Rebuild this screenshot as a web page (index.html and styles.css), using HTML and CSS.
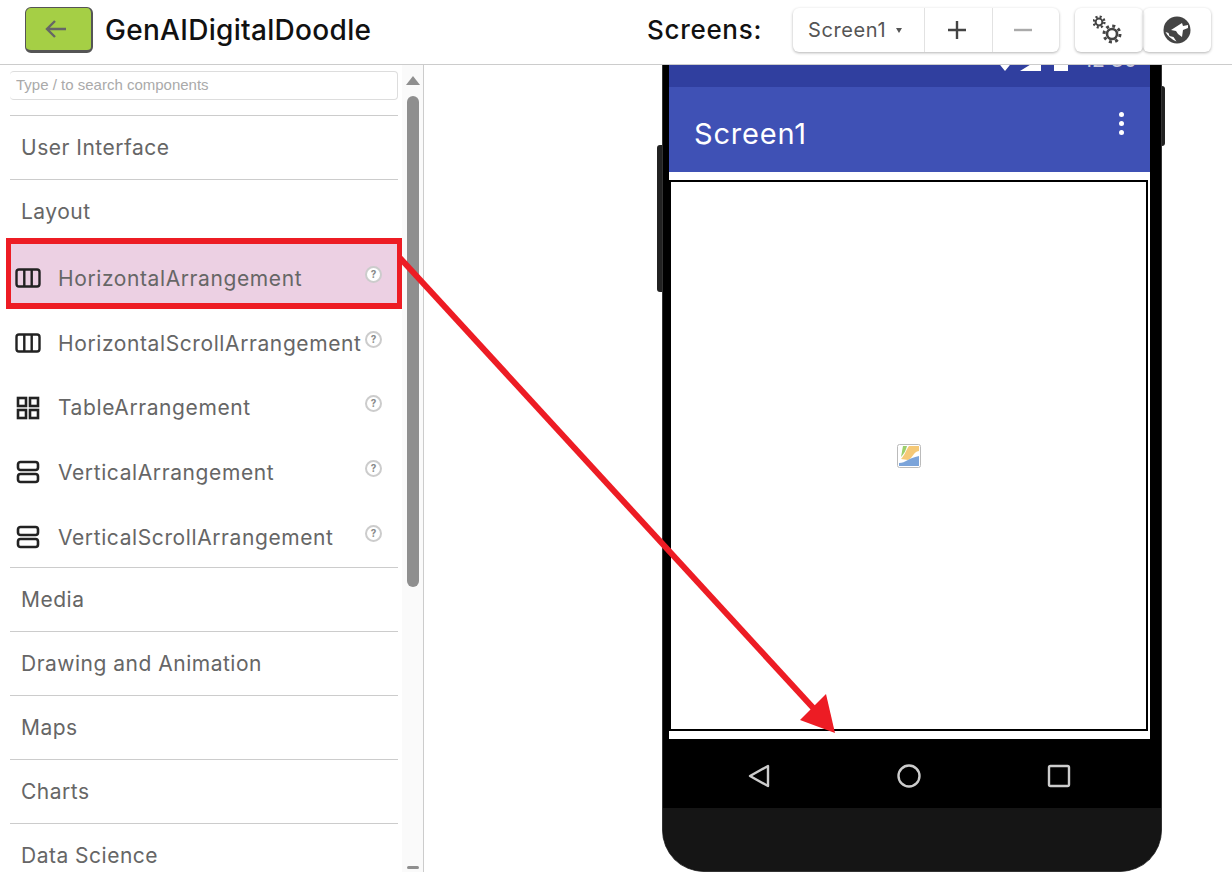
FILE: index.html
```html
<!DOCTYPE html>
<html>
    <head>
        <title>GenAIDigitalDoodle</title>
        <link rel="stylesheet" href="styles.css">
    </head>
    <body>
        <div class="topbar">
            <button class="back-btn">
                <svg width="26" height="26" viewBox="0 0 26 26"><path d="M23 13H4M12 5l-8 8 8 8" fill="none" stroke="#666" stroke-width="2.4"/></svg>
            </button>
            <div class="project-name">GenAIDigitalDoodle</div>
            <div class="screens-label">Screens:</div>
            <div class="btn-group">
                <div class="tool-btn screen-select">Screen1 <span class="caret"></span></div>
                <div class="tool-btn add-btn">
                    <svg width="22" height="22" viewBox="0 0 22 22"><path d="M11 2v18M2 11h18" stroke="#444" stroke-width="2.4"/></svg>
                </div>
                <div class="tool-btn remove-btn">
                    <svg width="22" height="22" viewBox="0 0 22 22"><path d="M2 11h18" stroke="#aaa" stroke-width="2.4"/></svg>
                </div>
            </div>
            <div class="tool-btn single settings-btn">
                <svg width="32" height="32" viewBox="0 0 32 32">
                    <circle cx="6" cy="8" r="3.400" fill="none" stroke="#444" stroke-width="2"/>
                    <circle cx="6" cy="8" r="5.400" fill="none" stroke="#444" stroke-width="2.400" stroke-dasharray="2.100 2.140"/>
                    <circle cx="19" cy="20" r="5" fill="none" stroke="#444" stroke-width="2.600"/>
                    <circle cx="19" cy="20" r="8" fill="none" stroke="#444" stroke-width="3" stroke-dasharray="3 3.280"/>
                </svg>
            </div>
            <div class="tool-btn single">
                <svg width="28" height="28" viewBox="0 0 28 28">
                    <circle cx="14" cy="14" r="13.500" fill="#444"/>
                    <path d="M8 14 19 7l1 3 5-1v3l-5 2-1 7-4-3-2-3z" fill="#fff"/>
                    <path d="M2.500 16q3 6 11 9.500l-3-4.500-4-1-1-3z" fill="#fff"/>
                </svg>
            </div>
        </div>

        <div class="main">
            <div class="palette">
                <div class="palette-list">
                    <input class="search" type="text" placeholder="Type / to search components">
                    <div class="category">User Interface</div>
                    <div class="category">Layout</div>
                    <div class="item selected">
                        <svg class="item-icon" viewBox="0 0 26 20"><rect x="1.500" y="1.500" width="23" height="17" rx="2.500" fill="none" stroke="#222" stroke-width="2.400"/><path d="M9.300 2v16M16.700 2v16" stroke="#222" stroke-width="2.400"/></svg>
                        <span class="item-name">HorizontalArrangement</span>
                        <span class="help">?</span>
                    </div>
                    <div class="item">
                        <svg class="item-icon" viewBox="0 0 26 20"><rect x="1.500" y="1.500" width="23" height="17" rx="2.500" fill="none" stroke="#222" stroke-width="2.400"/><path d="M9.300 2v16M16.700 2v16" stroke="#222" stroke-width="2.400"/></svg>
                        <span class="item-name">HorizontalScrollArrangement</span>
                        <span class="help">?</span>
                    </div>
                    <div class="item">
                        <svg class="item-icon tall" viewBox="0 0 26 24"><g fill="none" stroke="#222" stroke-width="2.600"><rect x="3" y="2" width="8" height="8"/><rect x="15" y="2" width="8" height="8"/><rect x="3" y="14" width="8" height="8"/><rect x="15" y="14" width="8" height="8"/></g></svg>
                        <span class="item-name">TableArrangement</span>
                        <span class="help">?</span>
                    </div>
                    <div class="item">
                        <svg class="item-icon tall" viewBox="0 0 26 24"><g fill="none" stroke="#222" stroke-width="2.600"><rect x="3" y="2" width="20" height="8" rx="2.500"/><rect x="3" y="14" width="20" height="8" rx="2.500"/></g></svg>
                        <span class="item-name">VerticalArrangement</span>
                        <span class="help">?</span>
                    </div>
                    <div class="item">
                        <svg class="item-icon tall" viewBox="0 0 26 24"><g fill="none" stroke="#222" stroke-width="2.600"><rect x="3" y="2" width="20" height="8" rx="2.500"/><rect x="3" y="14" width="20" height="8" rx="2.500"/></g></svg>
                        <span class="item-name">VerticalScrollArrangement</span>
                        <span class="help">?</span>
                    </div>
                    <div class="category">Media</div>
                    <div class="category">Drawing and Animation</div>
                    <div class="category">Maps</div>
                    <div class="category">Charts</div>
                    <div class="category">Data Science</div>
                </div>
                <div class="scrollbar">
                    <div class="arrow-up"></div>
                    <div class="thumb"></div>
                    <div class="arrow-down"></div>
                </div>
            </div>

            <div class="canvas">
                <div class="phone">
                    <div class="side-btn left"></div>
                    <div class="side-btn right"></div>
                    <div class="status-bar">
                        <svg width="70" height="20" viewBox="0 0 70 20"><path d="M-6 4H20L7 20zM22 20 43 7V20zM56 0H70V20H56z" fill="#fff"/></svg>
                        <span class="clock">12:30</span>
                    </div>
                    <div class="app-bar">
                        <span class="app-title">Screen1</span>
                        <span class="dots"><i></i><i></i><i></i></span>
                    </div>
                    <div class="form">
                        <div class="arrangement">
                            <svg width="24" height="24" viewBox="0 0 24 24">
                                <rect width="24" height="24" rx="2" fill="#fff"/>
                                <path d="M4 15C8 11 9 6 12 2h10v5c-6 1-6 7-11 9z" fill="#f5c977"/>
                                <path d="M6 2h4C9 6 7 10 4 13z" fill="#9ccf6b"/>
                                <path d="M2 19c7 0 9-5 20-7v10H2z" fill="#7ba4da"/>
                                <rect x=".5" y=".5" width="23" height="23" rx="2" fill="none" stroke="#bbb"/>
                            </svg>
                        </div>
                    </div>
                    <div class="nav-bar">
                        <svg width="26" height="26" viewBox="0 0 26 26"><path d="M22 3v20L4 13z" fill="none" stroke="#ccc" stroke-width="2.400" stroke-linejoin="round"/></svg>
                        <svg width="26" height="26" viewBox="0 0 26 26"><circle cx="13" cy="13" r="10.500" fill="none" stroke="#ccc" stroke-width="2.400"/></svg>
                        <svg width="26" height="26" viewBox="0 0 26 26"><rect x="3" y="3" width="20" height="20" rx="1.500" fill="none" stroke="#ccc" stroke-width="2.400"/></svg>
                    </div>
                    <div class="chin"></div>
                </div>
            </div>
        </div>

        <svg class="callout" width="1232" height="876" viewBox="0 0 1232 876">
            <path d="M400 258 816 711" stroke="#ed1c24" stroke-width="6" fill="none"/>
            <path d="M835 733 800 720 826 694z" fill="#ed1c24"/>
        </svg>
    </body>
</html>
```

FILE: styles.css
```css
body {
    font-family: Inter, "Liberation Sans", sans-serif;
    margin: 0;
    height: 876px;
    overflow: hidden;
    display: flex;
    flex-direction: column;
    background: #fff;
    color: #666;
}

.topbar {
    height: 65px;
    flex: none;
    box-sizing: border-box;
    display: flex;
    align-items: flex-start;
    padding: 7px 21px 0 25px;
    border-bottom: 1px solid #ccc;
}
.back-btn {
    width: 68px;
    height: 46px;
    padding: 0 5px 0 0;
    display: flex;
    align-items: center;
    justify-content: center;
    background: #a5cf45;
    border: 1px solid #555;
    border-bottom-width: 3px;
    border-right-width: 2px;
    border-radius: 6px;
}
.project-name {
    margin-left: 12px;
    font-size: 28px;
    line-height: 46px;
    font-weight: 500;
    letter-spacing: .3px;
    color: #111;
}
.screens-label {
    margin-left: auto;
    font-size: 26px;
    line-height: 46px;
    font-weight: 500;
    letter-spacing: .7px;
    color: #111;
}
.btn-group {
    display: flex;
    height: 44px;
    margin: 1px 0 0 31px;
    border-radius: 6px;
    box-shadow: 0 1px 3px rgba(0,0,0,0.3);
}
.tool-btn {
    width: 67px;
    display: flex;
    align-items: center;
    justify-content: center;
    border-right: 1px solid #e2e2e2;
    font-size: 19px;
    color: #555;
}
.tool-btn:last-child { border-right: none; }
.tool-btn.single {
    width: 68px;
    height: 44px;
    margin-top: 1px;
    border: none;
    border-radius: 6px;
    box-shadow: 0 1px 3px rgba(0,0,0,0.3);
}
.settings-btn { margin-left: 16px; }
.screen-select {
    width: 132px;
    box-sizing: border-box;
    justify-content: flex-start;
    padding-left: 15px;
    gap: 10px;
    font-size: 20px;
    letter-spacing: .6px;
}
.add-btn { width: 68px; padding-right: 3px; box-sizing: border-box; }
.remove-btn { width: 66px; padding-right: 6px; box-sizing: border-box; }
.caret {
    border: 3px solid transparent;
    border-top: 5px solid #555;
    border-bottom: none;
}

.main {
    flex: 1;
    min-height: 0;
    display: flex;
    overflow: hidden;
}

.palette {
    width: 424px;
    height: 807px;
    flex: none;
    box-sizing: border-box;
    display: flex;
    border-right: 1px solid #ccc;
}
.palette-list {
    width: 388px;
    margin-left: 10px;
    flex: none;
    padding-top: 6px;
}
.search {
    display: block;
    width: 100%;
    height: 29px;
    box-sizing: border-box;
    padding: 0 6px 3px;
    border: 1px solid #ddd;
    border-left: none;
    border-radius: 4px;
    font-family: "Liberation Sans", sans-serif;
    font-size: 15px;
    outline: none;
}
.search::placeholder { color: #aaa; }
.category {
    height: 64px;
    box-sizing: border-box;
    padding-left: 11px;
    display: flex;
    align-items: center;
    font-size: 21px;
    letter-spacing: .5px;
    border-top: 1px solid #ccc;
}
.search + .category { margin-top: 15px; }
.item {
    height: 64.6px;
    box-sizing: border-box;
    padding-top: 4px;
    display: flex;
    align-items: center;
    font-size: 21px;
    letter-spacing: .6px;
    color: #666;
}
.item.selected {
    margin: -5px -4px 0;
    height: 71px;
    padding-top: 9px;
    background: #ecd0e3;
    border: 6px solid #ed1c24;
    border-left-width: 5px;
    border-right-width: 5px;
}
.item-icon {
    width: 26px;
    height: 20px;
    flex: none;
    margin-left: 5px;
}
.item-icon.tall {
    height: 26px;
    margin-left: 5px;
}
.selected .item-icon { margin-left: 4px; }
.item-name {
    margin-left: 17px;
    white-space: nowrap;
}
.help {
    width: 17px;
    height: 17px;
    margin-left: auto;
    margin-right: 16px;
    margin-bottom: 8px;
    flex: none;
    box-sizing: border-box;
    border: 2px solid #ccc;
    border-radius: 50%;
    background: #fff;
    font-size: 10px;
    font-weight: 700;
    line-height: 13px;
    letter-spacing: 0;
    text-align: center;
    color: #888;
}
.selected .help { margin-right: 15px; }

.scrollbar {
    flex: 1;
    position: relative;
    background: #fafafa;
    margin-left: 4px;
}
.arrow-up {
    position: absolute;
    top: 11px;
    left: 4px;
    border: 7px solid transparent;
    border-bottom: 9px solid #8f8f8f;
    border-top: none;
}
.thumb {
    position: absolute;
    top: 31px;
    left: 5px;
    width: 12px;
    height: 491px;
    border-radius: 6px;
    background: #8f8f8f;
}
.arrow-down {
    position: absolute;
    bottom: 3px;
    left: 5px;
    width: 12px;
    height: 3px;
    border-radius: 2px;
    background: #8f8f8f;
}

.canvas {
    flex: 1;
    padding-left: 238px;
}
.phone {
    position: relative;
    width: 500px;
    height: 827px;
    margin-top: -20px;
    box-sizing: border-box;
    background: #000;
    border-radius: 0 0 42px 42px;
    border: solid #333;
    border-width: 0 1px 1px;
    padding: 0 11px 0 6px;
    display: flex;
    flex-direction: column;
}
.side-btn {
    position: absolute;
    background: #222;
}
.side-btn.left {
    left: -6px;
    top: 100px;
    width: 5px;
    height: 147px;
    border-radius: 3px 0 0 3px;
}
.side-btn.right {
    right: -4px;
    top: 41px;
    width: 3px;
    height: 60px;
    border-radius: 0 3px 3px 0;
}
.status-bar {
    height: 42px;
    flex: none;
    box-sizing: border-box;
    background: #303f9f;
    display: flex;
    align-items: flex-end;
    justify-content: flex-end;
    gap: 15px;
    padding: 0 13px 15px 0;
    color: #ccd;
    font-size: 21px;
    line-height: 21px;
}
.status-bar svg { margin-bottom: 1px; }
.clock { margin-bottom: 2px; }
.app-bar {
    height: 85px;
    flex: none;
    box-sizing: border-box;
    background: #3f51b5;
    display: flex;
    align-items: center;
    justify-content: space-between;
    padding: 8px 26px 0 25px;
    color: #fff;
}
.app-title {
    font-size: 29px;
    letter-spacing: .8px;
}
.dots {
    display: flex;
    flex-direction: column;
    gap: 4px;
    margin: 0 0 21px;
}
.dots i {
    width: 5px;
    height: 5px;
    border-radius: 50%;
    background: #fff;
}
.form {
    height: 567px;
    flex: none;
    box-sizing: border-box;
    background: #fff;
    padding: 8px 2px 8px 0;
}
.arrangement {
    height: 551px;
    box-sizing: border-box;
    border: 2px solid #000;
    display: flex;
    align-items: center;
    justify-content: center;
}
.nav-bar {
    height: 69px;
    flex: none;
    margin: 0 -3px 0 -3px;
    padding: 4px 81px 0 80px;
    box-sizing: border-box;
    display: flex;
    align-items: center;
    justify-content: space-between;
    background: #000;
}
.chin {
    flex: 1;
    margin: 0 -11px 0 -6px;
    background: #151515;
    border-radius: 0 0 41px 41px;
}

.callout {
    position: absolute;
    top: 0;
    left: 0;
    pointer-events: none;
}
```
